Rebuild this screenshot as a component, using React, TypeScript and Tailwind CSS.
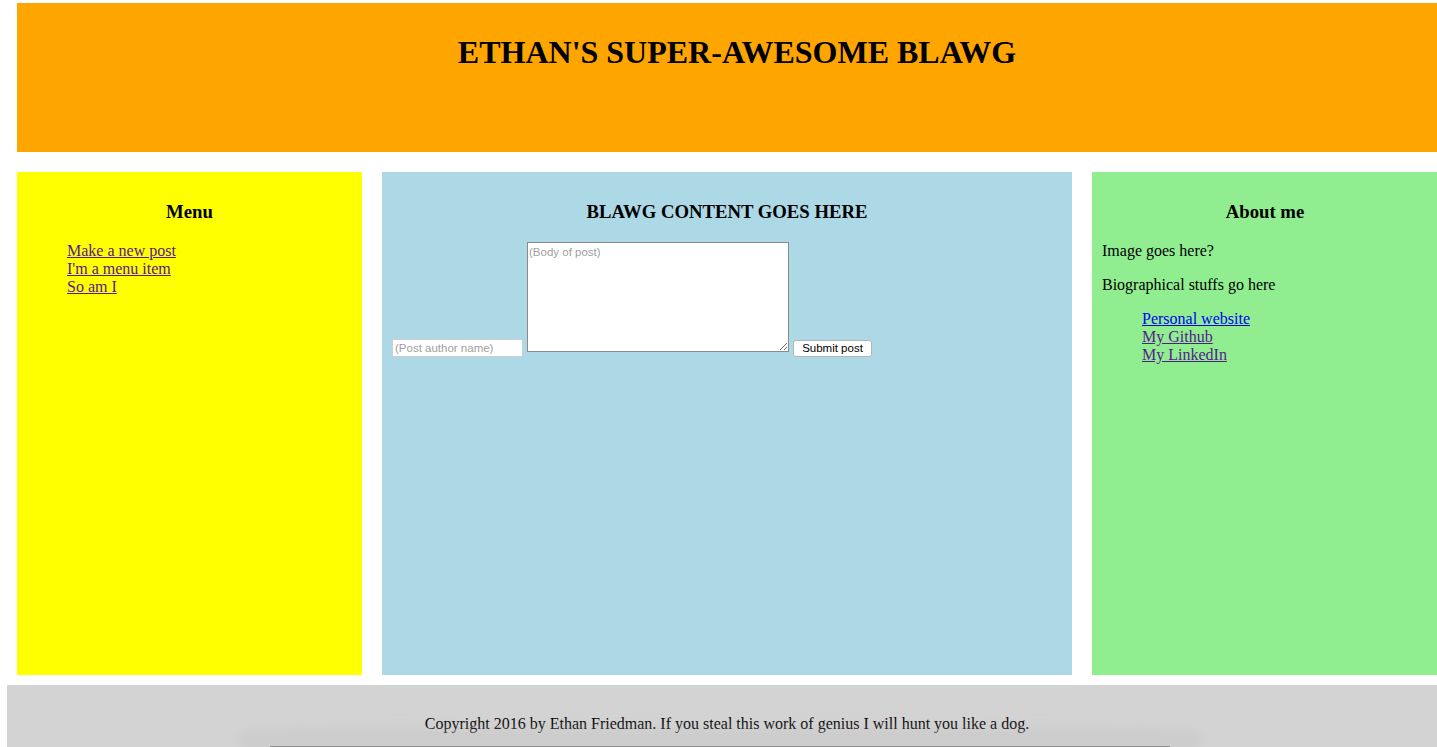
const serif = { fontFamily: "'Liberation Serif', 'Times New Roman', serif" };

function SideHeading({ children }: { children: React.ReactNode }) {
  return <h3 className="mt-[19px] text-center text-[18.72px] font-bold leading-[22px]">{children}</h3>;
}

export default function App() {
  return (
    <div className="relative h-[747px] w-[1437px] overflow-hidden bg-white text-black" style={serif}>
      {/* Header */}
      <header className="ml-[17px] mt-[3px] h-[149px] w-[1440px] bg-[#ffa500] pt-[31px]">
        <h1 className="text-center text-[32px] font-bold leading-[37px]">ETHAN'S SUPER-AWESOME BLAWG</h1>
      </header>

      {/* Columns */}
      <div className="ml-[17px] mt-[20px] flex h-[503px] gap-[20px]">
        <aside className="w-[345px] shrink-0 bg-[#ffff00] px-[10px] pt-[10px]">
          <SideHeading>Menu</SideHeading>
          <ul className="mt-[19px] pl-[40px] text-[16px] leading-[18px]">
            <li><a href="#" className="text-[#551a8b] underline">Make a new post</a></li>
            <li><a href="#" className="text-[#551a8b] underline">I'm a menu item</a></li>
            <li><a href="#" className="text-[#551a8b] underline">So am I</a></li>
          </ul>
        </aside>

        <main className="w-[690px] shrink-0 bg-[#add8e6] px-[10px] pt-[10px]">
          <SideHeading>BLAWG CONTENT GOES HERE</SideHeading>
          <form
            className="mt-[19px] flex items-end gap-[4px] text-[11.5px]"
            style={{ fontFamily: "'Liberation Sans', Arial, sans-serif" }}
            onSubmit={(e) => e.preventDefault()}
          >
            <input
              type="text"
              placeholder="(Post author name)"
              className="h-[18px] w-[131px] border border-[#cfcfcf] bg-white px-[2px] text-[11.5px] placeholder:text-[#a0a0a0] outline-none"
            />
            <textarea
              placeholder="(Body of post)"
              className="mb-[5px] h-[110px] w-[262px] border border-[#8a8a8a] bg-white px-[1px] py-[1px] text-[11.5px] placeholder:text-[#a0a0a0] outline-none"
            />
            <button
              type="submit"
              className="h-[17px] w-[79px] rounded-[3px] border border-[#b5b5b5] bg-white text-[11.5px] leading-[15px] text-black"
            >
              Submit post
            </button>
          </form>
        </main>

        <aside className="w-[346px] shrink-0 bg-[#90ee90] px-[10px] pt-[10px] text-[16px] leading-[18px]">
          <SideHeading>About me</SideHeading>
          <p className="mt-[19px]">Image goes here?</p>
          <p className="mt-[16px]">Biographical stuffs go here</p>
          <ul className="mt-[16px] pl-[40px]">
            <li><a href="#" className="text-[#0000ee] underline">Personal website</a></li>
            <li><a href="#" className="text-[#551a8b] underline">My Github</a></li>
            <li><a href="#" className="text-[#551a8b] underline">My LinkedIn</a></li>
          </ul>
        </aside>
      </div>

      {/* Footer */}
      <footer className="relative ml-[7px] mt-[10px] h-[80px] w-[1440px] bg-[#d3d3d3] pt-[30px]">
        <p className="text-center text-[16px] leading-[18px]">
          Copyright 2016 by Ethan Friedman. If you steal this work of genius I will hunt you like a dog.
        </p>
      </footer>
      <div className="absolute bottom-0 left-[240px] h-[26px] w-[960px] rounded-t-[50%] bg-gradient-to-t from-[#c2c2c2] to-transparent opacity-70 blur-[6px]" />
      <div className="absolute bottom-0 left-[270px] h-px w-[900px] bg-[#8f8f8f]" />
    </div>
  );
}
